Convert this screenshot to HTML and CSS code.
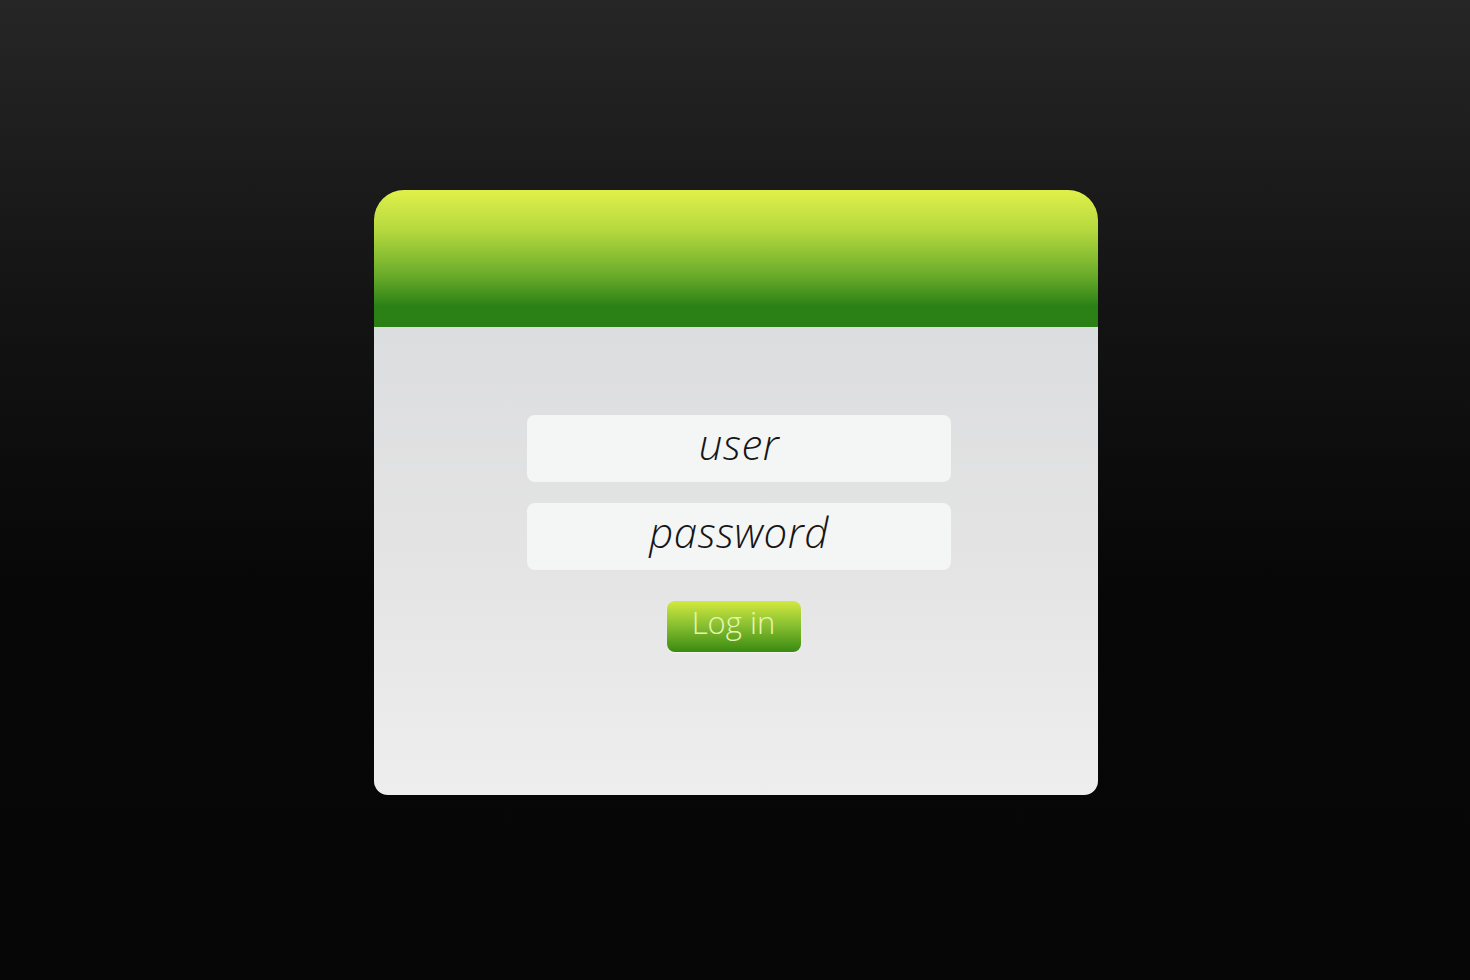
FILE: index.html
```html
<!DOCTYPE html>
<html>
<head>
<meta charset="utf-8">
<link rel="stylesheet" href="styles.css">
</head>
<body>
<div class="page">
  <div class="card">
    <div class="header"></div>
    <div class="body">
      <div class="field">user</div>
      <div class="field">password</div>
      <div class="btn">Log in</div>
    </div>
  </div>
</div>
</body>
</html>
```
FILE: styles.css
```css
html, body {
  margin: 0;
  padding: 0;
  height: 100%;
}
body {
  background: linear-gradient(to bottom, #262626 0%, #141414 30%, #070707 60%, #060606 100%);
  font-family: "Open Sans", "Lato", sans-serif;
}
.page {
  height: 980px;
  display: flex;
  justify-content: center;
  padding-top: 190px;
  box-sizing: border-box;
}
.card {
  width: 724px;
  height: 605px;
  margin-left: 2px;
  border-radius: 30px 30px 14px 14px;
  overflow: hidden;
  display: flex;
  flex-direction: column;
}
.header {
  height: 137px;
  flex: none;
  background: linear-gradient(to bottom, #e0f04a 0%, #b4d83e 30%, #6aac2a 62%, #2b8116 85%, #2a7f15 100%);
}
.body {
  flex: 1;
  background: linear-gradient(to bottom, #dcdddf 0%, #e4e4e4 50%, #eeeeee 100%);
  display: flex;
  flex-direction: column;
  align-items: center;
  padding-top: 88px;
  padding-left: 6px;
  box-sizing: border-box;
}
.field {
  width: 424px;
  height: 67px;
  background: #f4f5f5;
  border-radius: 8px;
  display: flex;
  align-items: center;
  justify-content: center;
  font-style: italic;
  font-weight: 300;
  font-size: 42px;
  letter-spacing: 0.5px;
  color: #151515;
  margin-bottom: 21px;
  padding-bottom: 11px;
  box-sizing: border-box;
}
.btn {
  margin-top: 10px;
  margin-right: 11px;
  width: 134px;
  height: 51px;
  border-radius: 8px;
  background: linear-gradient(to bottom, #d2e93e 0%, #8cc232 45%, #3a8a12 100%);
  box-shadow: 0 1px 2px rgba(255,255,255,0.6);
  display: flex;
  align-items: center;
  justify-content: center;
  font-weight: 300;
  font-size: 31px;
  color: #e8f5b0;
  padding-bottom: 10px;
  box-sizing: border-box;
}
```
